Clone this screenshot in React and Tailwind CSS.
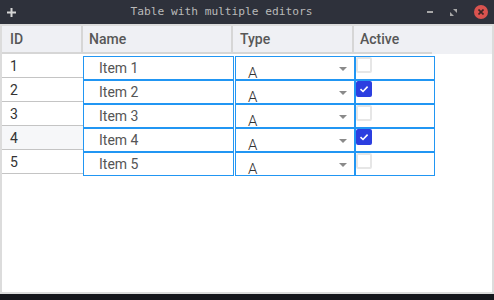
import React from "react";

const rows = [
  { id: 1, name: "Item 1", type: "A", active: false },
  { id: 2, name: "Item 2", type: "A", active: true },
  { id: 3, name: "Item 3", type: "A", active: false },
  { id: 4, name: "Item 4", type: "A", active: true },
  { id: 5, name: "Item 5", type: "A", active: false },
];

const Checkbox = ({ checked }) =>
  checked ? (
    <div className="w-[16px] h-[16px] rounded-[2px] bg-[#2c3ee0] flex items-center justify-center">
      <svg width="10" height="8" viewBox="0 0 10 8">
        <path d="M1.5 4.2 L4 6.5 L8.6 1.6" stroke="#fff" strokeWidth="1.6" fill="none" />
      </svg>
    </div>
  ) : (
    <div className="w-[16px] h-[16px] rounded-[2px] border-2 border-[#e6e6e6] bg-white" />
  );

const App = () => {
  return (
    <div className="w-[494px] h-[300px] flex flex-col bg-[#2e313b] overflow-hidden font-['Roboto',sans-serif]">
      {/* title bar */}
      <div className="h-[24px] flex items-center pl-[7px] pr-[6px]">
        <svg width="9" height="9" viewBox="0 0 9 9">
          <path d="M4.5 0 V9 M0 4.5 H9" stroke="#d6d6d6" strokeWidth="2" />
        </svg>
        <div className="flex-1 text-center text-[11.2px] text-[#b9b9b9] font-['DejaVu_Sans_Mono',monospace]">
          Table with multiple editors
        </div>
        <div className="flex items-center gap-[17px]">
          <div className="w-[6px] h-[2px] bg-[#a8a8a8]" />
          <svg width="7" height="7" viewBox="0 0 7 7">
            <path d="M0 7 V3 L4 7 Z" fill="#a8a8a8" />
            <path d="M7 0 V4 L3 0 Z" fill="#a8a8a8" />
          </svg>
          <div className="w-[14px] h-[14px] rounded-full bg-[#d9534f] flex items-center justify-center">
            <svg width="6" height="6" viewBox="0 0 6 6">
              <path d="M0.5 0.5 L5.5 5.5 M5.5 0.5 L0.5 5.5" stroke="#3a2626" strokeWidth="1.6" />
            </svg>
          </div>
        </div>
      </div>

      {/* window content */}
      <div className="flex-1 border-2 border-[#dcdcdc] bg-white flex flex-col text-[14px]">
        {/* header */}
        <div className="h-[28px] flex bg-[#eff0f4] font-medium text-[#575757]">
          <div className="w-[81px] border-r-2 border-b-2 border-[#d6d6d6] pl-2 pt-[1px] flex items-center">ID</div>
          <div className="w-[150px] border-r-2 border-b-2 border-[#d6d6d6] pl-[6px] pt-[1px] flex items-center">Name</div>
          <div className="w-[121px] border-r-2 border-b-2 border-[#d6d6d6] pl-[7px] pt-[1px] flex items-center">Type</div>
          <div className="w-[78px] border-b-2 border-[#d6d6d6] pl-[6px] pt-[1px] flex items-center">Active</div>
        </div>

        {/* body */}
        <div className="flex">
          <div className="w-[81px] flex flex-col">
            {rows.map((r) => (
              <div
                key={r.id}
                className={`h-[24px] border-b border-[#c4c4c4] pl-2 pt-[2px] flex items-center text-[#333] ${
                  r.id === 4 ? "bg-[#f6f7f9]" : "bg-white"
                }`}
              >
                {r.id}
              </div>
            ))}
          </div>
          <div className="flex flex-col pt-[2px]">
            {rows.map((r) => (
              <div key={r.id} className="h-[24px] flex">
                <div className="w-[151px] border border-[#2196f3] pl-[15px] flex items-center text-[#555]">
                  {r.name}
                </div>
                <div className="w-[120px] ml-[1px] border border-[#2196f3] relative text-[#333]">
                  <span className="absolute left-[12px] top-[9px] leading-[14px] text-[15px] font-light">{r.type}</span>
                  <svg className="absolute right-[7px] top-[10px]" width="8" height="4" viewBox="0 0 8 4">
                    <path d="M0 0 H8 L4 4 Z" fill="#8a8a8a" />
                  </svg>
                </div>
                <div className="w-[80px] border border-[#2196f3]">
                  <Checkbox checked={r.active} />
                </div>
              </div>
            ))}
          </div>
        </div>
      </div>
      <div className="h-[6px] bg-[#15161c]" />
    </div>
  );
};

export default App;
